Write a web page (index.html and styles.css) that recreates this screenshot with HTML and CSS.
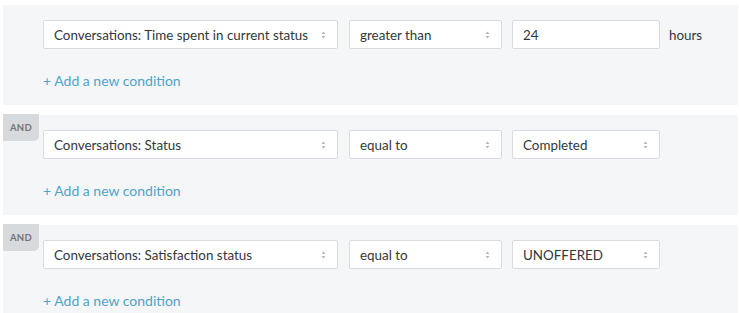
FILE: index.html
```html
<!DOCTYPE html>
<html lang="en">
<head>
  <meta charset="UTF-8">
  <title>Conditions</title>
  <link rel="stylesheet" href="styles.css">
</head>
<body>
  <div class="conditions">

    <div class="group">
      <div class="row">
        <div class="select field-select">
          <span>Conversations: Time spent in current status</span>
          <svg class="caret" width="5" height="8" viewBox="0 0 5 8"><path d="M2.5 0.5 L4.5 3 L0.5 3 Z M0.5 5 L4.5 5 L2.5 7.5 Z"/></svg>
        </div>
        <div class="select op-select">
          <span>greater than</span>
          <svg class="caret" width="5" height="8" viewBox="0 0 5 8"><path d="M2.5 0.5 L4.5 3 L0.5 3 Z M0.5 5 L4.5 5 L2.5 7.5 Z"/></svg>
        </div>
        <div class="input value-box">24</div>
        <span class="unit">hours</span>
      </div>
      <a class="add-link" href="#">+ Add a new condition</a>
    </div>

    <div class="group">
      <span class="joiner">AND</span>
      <div class="row">
        <div class="select field-select">
          <span>Conversations: Status</span>
          <svg class="caret" width="5" height="8" viewBox="0 0 5 8"><path d="M2.5 0.5 L4.5 3 L0.5 3 Z M0.5 5 L4.5 5 L2.5 7.5 Z"/></svg>
        </div>
        <div class="select op-select">
          <span>equal to</span>
          <svg class="caret" width="5" height="8" viewBox="0 0 5 8"><path d="M2.5 0.5 L4.5 3 L0.5 3 Z M0.5 5 L4.5 5 L2.5 7.5 Z"/></svg>
        </div>
        <div class="select value-box">
          <span>Completed</span>
          <svg class="caret" width="5" height="8" viewBox="0 0 5 8"><path d="M2.5 0.5 L4.5 3 L0.5 3 Z M0.5 5 L4.5 5 L2.5 7.5 Z"/></svg>
        </div>
      </div>
      <a class="add-link" href="#">+ Add a new condition</a>
    </div>

    <div class="group">
      <span class="joiner">AND</span>
      <div class="row">
        <div class="select field-select">
          <span>Conversations: Satisfaction status</span>
          <svg class="caret" width="5" height="8" viewBox="0 0 5 8"><path d="M2.5 0.5 L4.5 3 L0.5 3 Z M0.5 5 L4.5 5 L2.5 7.5 Z"/></svg>
        </div>
        <div class="select op-select">
          <span>equal to</span>
          <svg class="caret" width="5" height="8" viewBox="0 0 5 8"><path d="M2.5 0.5 L4.5 3 L0.5 3 Z M0.5 5 L4.5 5 L2.5 7.5 Z"/></svg>
        </div>
        <div class="select value-box">
          <span>UNOFFERED</span>
          <svg class="caret" width="5" height="8" viewBox="0 0 5 8"><path d="M2.5 0.5 L4.5 3 L0.5 3 Z M0.5 5 L4.5 5 L2.5 7.5 Z"/></svg>
        </div>
      </div>
      <a class="add-link" href="#">+ Add a new condition</a>
    </div>

  </div>
</body>
</html>
```

FILE: styles.css
```css
* {
  margin: 0;
  padding: 0;
  box-sizing: border-box;
}
body, html {
  height: 100%;
  font-family: Lato, "Open Sans", sans-serif;
  font-size: 13.4px;
  background-color: #ffffff;
  color: #32373c;
  overflow: hidden;
}
.conditions {
  padding: 5px 1px 0 3px;
  display: flex;
  flex-direction: column;
  gap: 10px;
}
.group {
  position: relative;
  background-color: #f5f6f8;
  height: 100px;
  padding: 15px 0 0 40px;
}
.joiner {
  position: absolute;
  top: -1px;
  left: 0;
  width: 36px;
  height: 27px;
  background-color: #d6dadd;
  border-bottom-right-radius: 5px;
  color: #6d757d;
  font-size: 9.5px;
  font-weight: 700;
  letter-spacing: 0.3px;
  display: flex;
  justify-content: center;
  padding-top: 8px;
}
.row {
  display: flex;
  align-items: center;
  height: 29px;
}
.select, .input {
  height: 29px;
  background-color: #ffffff;
  border: 1px solid #d8dce1;
  border-radius: 2px;
  display: flex;
  align-items: center;
  justify-content: space-between;
  padding: 0 11px 0 10px;
}
.field-select {
  width: 295px;
}
.op-select {
  width: 153px;
  margin-left: 11px;
}
.value-box {
  width: 148px;
  margin-left: 10px;
}
.caret {
  fill: #b3b9bf;
}
.unit {
  margin-left: 9px;
}
.add-link {
  display: inline-block;
  margin-top: 23px;
  color: #4fa4c9;
  text-decoration: none;
  font-size: 14px;
}
```
